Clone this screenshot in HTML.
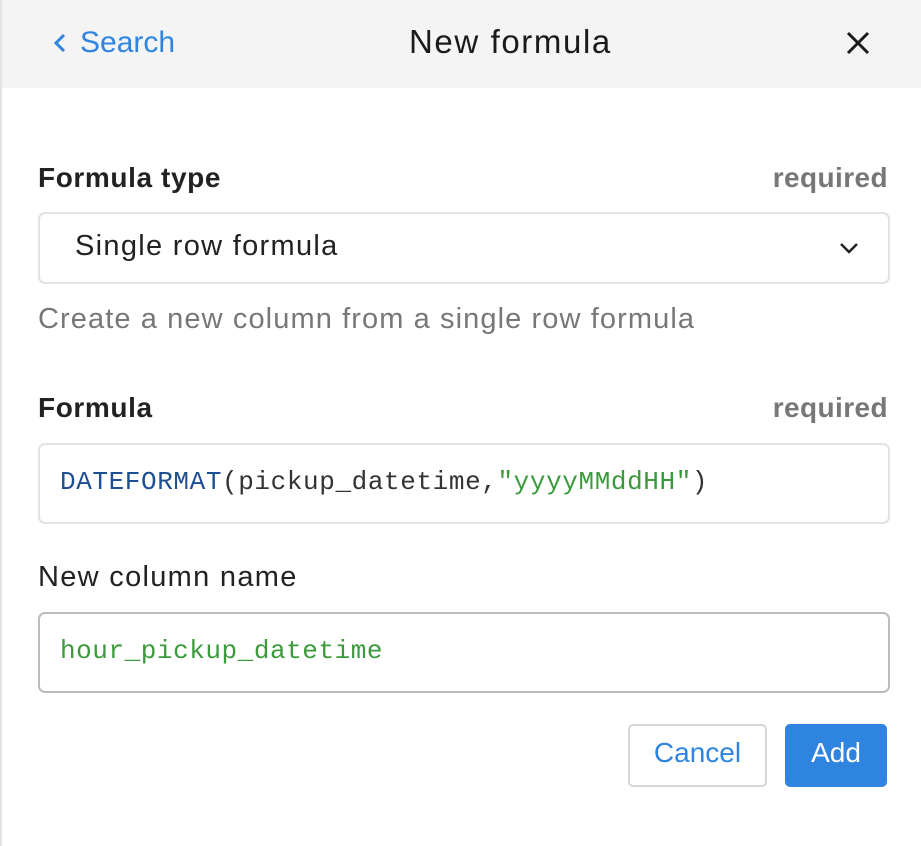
<!DOCTYPE html>
<html><head><style>
body{margin:0;width:921px;height:846px;background:#fff;font-family:"Liberation Sans",sans-serif;position:relative;overflow:hidden}
.lb{position:absolute;left:0;top:0;width:2px;height:846px;background:#e4e4e4}
.hd{position:absolute;left:2px;top:0;right:0;height:88px;background:#f4f4f4}
.abs{position:absolute;white-space:nowrap}
.box{position:absolute;left:38px;width:848px;border:2px solid #e3e3e3;border-radius:7px;background:#fff}
.mono{font-family:"Liberation Mono",monospace;font-size:26px}
.reg{font-size:29px;letter-spacing:1.3px}
</style></head><body>
<div class="lb"></div>
<div class="hd"></div>
<svg class="abs" style="left:52px;top:32px" width="16" height="22"><path d="M12 3 L4 11 L12 19" stroke="#2f84e0" stroke-width="3" fill="none"/></svg>
<div class="abs" style="left:80px;top:26px;font-size:30px;color:#2f84e0">Search</div>
<div class="abs" style="left:409px;top:23px;font-size:33px;letter-spacing:1.6px;color:#1a1a1a">New formula</div>
<svg class="abs" style="left:845px;top:30px" width="26" height="26"><path d="M3 3 L23 23 M23 3 L3 23" stroke="#1a1a1a" stroke-width="3"/></svg>
<div class="abs" style="left:38px;top:162px;font-size:28px;font-weight:bold;letter-spacing:0.6px;color:#222">Formula type</div>
<div class="abs" style="right:33px;top:162px;font-size:28px;font-weight:bold;letter-spacing:0.4px;color:#777">required</div>
<div class="box" style="top:212px;height:68px"></div>
<div class="abs reg" style="left:75px;top:230px;color:#222">Single row formula</div>
<svg class="abs" style="left:838px;top:240px" width="22" height="16"><path d="M3 4 L11 12 L19 4" stroke="#222" stroke-width="2.5" fill="none"/></svg>
<div class="abs reg" style="left:38px;top:303px;color:#777;letter-spacing:1.1px">Create a new column from a single row formula</div>
<div class="abs" style="left:38px;top:392px;font-size:28px;font-weight:bold;letter-spacing:0.6px;color:#222">Formula</div>
<div class="abs" style="right:33px;top:392px;font-size:28px;font-weight:bold;letter-spacing:0.4px;color:#777">required</div>
<div class="box" style="top:443px;height:77px"></div>
<div class="abs mono" style="left:60px;top:467px;letter-spacing:0.6px"><span style="color:#1d4f91">DATEFORMAT</span><span style="color:#333">(pickup_datetime,</span><span style="color:#3c9a3c">"yyyyMMddHH"</span><span style="color:#333">)</span></div>
<div class="abs reg" style="left:38px;top:561px;color:#222">New column name</div>
<div class="box" style="top:612px;height:77px;border-color:#bcbcbc"></div>
<div class="abs mono" style="left:60px;top:636px;color:#3c9a3c;letter-spacing:0.55px">hour_pickup_datetime</div>
<div class="abs" style="left:628px;top:724px;width:135px;height:59px;border:2px solid #d6d6d6;border-radius:5px;background:#fff"></div>
<div class="abs" style="left:628px;top:737px;width:139px;text-align:center;font-size:28px;color:#2f84e0">Cancel</div>
<div class="abs" style="left:785px;top:724px;width:102px;height:63px;border-radius:5px;background:#2f84e0"></div>
<div class="abs" style="left:785px;top:737px;width:102px;text-align:center;font-size:28px;color:#fff">Add</div>
</body></html>
